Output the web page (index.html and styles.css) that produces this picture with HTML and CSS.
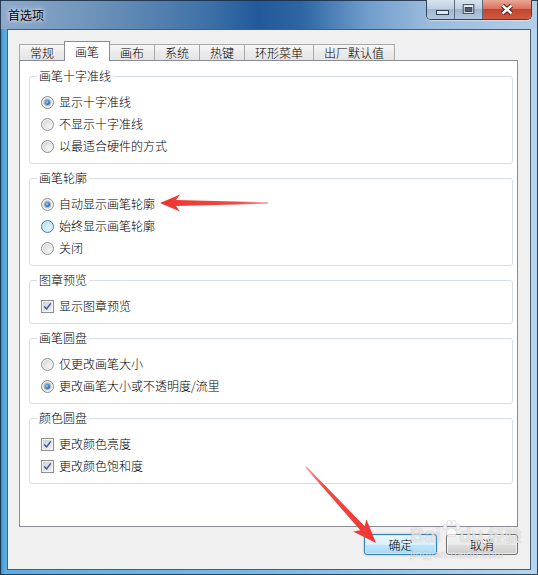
FILE: index.html
```html
<!DOCTYPE html>
<html lang="zh-CN">
<head>
    <meta charset="UTF-8">
    <title>首选项</title>
    <link rel="stylesheet" href="styles.css">
</head>
<body>
    <div class="window">
        <div class="titlebar">
            <span class="title">首选项</span>
            <div class="caption-buttons">
                <span class="cap-btn cap-min">
                    <svg viewBox="0 0 27 19" width="27" height="19">
                        <rect x="9.5" y="10.5" width="12" height="4" fill="#dfe7f0" stroke="#2f3d50"/>
                    </svg>
                </span>
                <span class="cap-btn cap-max">
                    <svg viewBox="0 0 28 19" width="28" height="19">
                        <rect x="8.5" y="4.5" width="11" height="9" fill="#f4f7fa" stroke="#2f3d50"/>
                        <rect x="10.5" y="7.5" width="7" height="4" fill="#4a5d74" stroke="#2f3d50"/>
                    </svg>
                </span>
                <span class="cap-btn cap-close">
                    <svg viewBox="0 0 48 19" width="48" height="19">
                        <path d="M19.5 5.5 L28.5 13.5 M28.5 5.5 L19.5 13.5" stroke="#4a1e16" stroke-width="4.4" fill="none"/>
                        <path d="M19.5 5.5 L28.5 13.5 M28.5 5.5 L19.5 13.5" stroke="#ffffff" stroke-width="2.4" fill="none"/>
                    </svg>
                </span>
            </div>
        </div>

        <div class="client">
            <div class="tabs">
                <span class="tab">常规</span>
                <span class="tab active">画笔</span>
                <span class="tab">画布</span>
                <span class="tab">系统</span>
                <span class="tab">热键</span>
                <span class="tab">环形菜单</span>
                <span class="tab">出厂默认值</span>
            </div>

            <div class="panel">
                <fieldset class="group">
                    <legend>画笔十字准线</legend>
                    <label class="option"><span class="radio checked"></span>显示十字准线</label>
                    <label class="option"><span class="radio"></span>不显示十字准线</label>
                    <label class="option"><span class="radio"></span>以最适合硬件的方式</label>
                </fieldset>

                <fieldset class="group">
                    <legend>画笔轮廓</legend>
                    <label class="option"><span class="radio checked"></span>自动显示画笔轮廓</label>
                    <label class="option"><span class="radio hot"></span>始终显示画笔轮廓</label>
                    <label class="option"><span class="radio"></span>关闭</label>
                </fieldset>

                <fieldset class="group">
                    <legend>图章预览</legend>
                    <label class="option">
                        <span class="check"><svg viewBox="0 0 9 9" width="9" height="9"><path d="M1.2 4.4 L3.6 6.9 L7.8 1.4" /></svg></span>显示图章预览
                    </label>
                </fieldset>

                <fieldset class="group">
                    <legend>画笔圆盘</legend>
                    <label class="option"><span class="radio"></span>仅更改画笔大小</label>
                    <label class="option"><span class="radio checked"></span>更改画笔大小或不透明度/流里</label>
                </fieldset>

                <fieldset class="group">
                    <legend>颜色圆盘</legend>
                    <label class="option">
                        <span class="check"><svg viewBox="0 0 9 9" width="9" height="9"><path d="M1.2 4.4 L3.6 6.9 L7.8 1.4" /></svg></span>更改颜色亮度
                    </label>
                    <label class="option">
                        <span class="check"><svg viewBox="0 0 9 9" width="9" height="9"><path d="M1.2 4.4 L3.6 6.9 L7.8 1.4" /></svg></span>更改颜色饱和度
                    </label>
                </fieldset>
            </div>

            <div class="buttons">
                <button class="btn btn-default">确定</button>
                <button class="btn">取消</button>
            </div>
        </div>

        <!-- annotation arrows drawn over the dialog -->
        <svg class="annotations" viewBox="0 0 538 575" width="538" height="575">
            <defs>
                <linearGradient id="fadeLeft" x1="160" y1="0" x2="270" y2="0" gradientUnits="userSpaceOnUse">
                    <stop offset="0" stop-color="#ee3530"/>
                    <stop offset="0.7" stop-color="#f04a44"/>
                    <stop offset="1" stop-color="#f7a7a3"/>
                </linearGradient>
                <linearGradient id="fadeDown" x1="376" y1="543" x2="306" y2="467" gradientUnits="userSpaceOnUse">
                    <stop offset="0" stop-color="#ee3530"/>
                    <stop offset="0.75" stop-color="#f04a44"/>
                    <stop offset="1" stop-color="#f6a09c"/>
                </linearGradient>
            </defs>
            <polygon fill="url(#fadeLeft)" points="160,203 180,194.5 176,200 268,202.3 268,203.7 176,206 180,211.5"/>
            <polygon fill="url(#fadeDown)" points="376,543 353.2,531.5 360.3,530.3 305.4,467.5 306.6,466.5 364.7,526.3 366.4,519.3"/>
        </svg>

        <div class="watermark">
            <div class="wm-logo">Bai<svg class="wm-paw" viewBox="0 0 20 18" width="20" height="18">
                <ellipse cx="4" cy="7" rx="2.2" ry="2.8"/>
                <ellipse cx="8" cy="3" rx="2.2" ry="2.8"/>
                <ellipse cx="13" cy="3" rx="2.2" ry="2.8"/>
                <ellipse cx="17" cy="7" rx="2.2" ry="2.8"/>
                <path d="M10.5 8 C7 8 5 12 5.5 14.5 C6 17 9 16 10.5 16 C12 16 15 17 15.5 14.5 C16 12 14 8 10.5 8 Z"/>
            </svg>du<span class="wm-cn">经验</span></div>
            <div class="wm-url">jingyan.baidu.com</div>
        </div>
    </div>
</body>
</html>
```

FILE: styles.css
```css
* {
    margin: 0;
    padding: 0;
    box-sizing: border-box;
}

body {
    width: 538px;
    height: 575px;
    overflow: hidden;
    font-family: "Noto Sans CJK SC", "Liberation Sans", sans-serif;
    font-size: 12px;
    font-weight: 300;
    color: #000;
    background: #fff;
}

/* Window frame */
.window {
    position: relative;
    width: 538px;
    height: 575px;
    display: flex;
    flex-direction: column;
    background: linear-gradient(90deg, #2b6ca6 0, #4b9fd7 2px, #5caee0 6px, #79bae5 50%, #b5d6f0 100%);
    box-shadow: inset 0 0 0 1px rgba(24, 44, 66, 0.85);
}

.titlebar {
    height: 29px;
    display: flex;
    align-items: flex-start;
    padding: 0 6px 0 8px;
    background: linear-gradient(90deg, #8daacb 0, #6d92b9 18%, #3f72a8 38%, #22599a 48%, #2d66a3 56%, #6f9ccb 68%, #9cbcdd 80%, #b3cee7 100%);
    box-shadow: inset 0 1px 0 rgba(24, 44, 66, 0.85), inset 1px 0 0 rgba(24, 44, 66, 0.85), inset -1px 0 0 rgba(24, 44, 66, 0.85);
}

.title {
    padding-top: 7px;
    line-height: 16px;
    font-size: 12px;
    font-weight: 400;
    color: #000;
    text-shadow: 0 0 6px rgba(255, 255, 255, 0.9), 0 0 3px rgba(255, 255, 255, 0.8);
}

/* Caption buttons */
.caption-buttons {
    margin-left: auto;
    display: flex;
    height: 20px;
    border: 1px solid #34435a;
    border-top: none;
    border-radius: 0 0 5px 5px;
    overflow: hidden;
    box-shadow: 0 1px 0 rgba(255, 255, 255, 0.45);
}

.cap-btn {
    display: flex;
    height: 19px;
}

.cap-min,
.cap-max {
    background: linear-gradient(#d8e3ef 0, #bfcfe1 45%, #a2b7cf 50%, #b3c8de 100%);
    border-right: 1px solid #5b6b80;
}

.cap-min {
    width: 28px;
}

.cap-max {
    width: 28px;
}

.cap-close {
    width: 48px;
    background: linear-gradient(#eaa895 0, #d9735e 45%, #c4442c 50%, #cf5a40 100%);
}

/* Client area */
.client {
    flex: 1;
    margin: 0 7px 5px;
    display: flex;
    flex-direction: column;
    padding: 11px 12px 14px 11px;
    background: #f0f0f0;
    border: 1px solid #4f5b69;
}

.tabs {
    display: flex;
    align-items: flex-end;
}

.tab {
    height: 16px;
    padding: 0 10px;
    margin-right: -1px;
    line-height: 15px;
    border: 1px solid #a7a9ad;
    border-bottom: none;
    background: linear-gradient(#f7f7f7, #ebebeb 50%, #e4e4e4);
    white-space: nowrap;
}

.tab.active {
    position: relative;
    z-index: 1;
    height: 20px;
    margin-bottom: -1px;
    padding-top: 2px;
    background: #fff;
    border-color: #898c95;
}

.panel {
    flex: 1;
    display: flex;
    flex-direction: column;
    gap: 7px;
    padding: 8px 4px 0 9px;
    background: #fff;
    border: 1px solid #898c95;
}

/* Group boxes */
.group {
    min-width: 0;
    padding: 8px 0 6px 11px;
    border: 1px solid #d5dfe5;
    border-radius: 3px;
}

.group legend {
    margin-left: -4px;
    padding: 0 2px;
    line-height: 14px;
}

.option {
    display: flex;
    align-items: center;
    gap: 5px;
    height: 22px;
    line-height: 14px;
}

/* Radio buttons */
.radio {
    position: relative;
    flex: none;
    width: 13px;
    height: 13px;
    border-radius: 50%;
    border: 1px solid #8e8f8f;
    background: radial-gradient(circle at 65% 65%, #f6f6f6 0, #e2e2e2 45%, #c9c9c9 100%);
    box-shadow: inset 0 0 0 1px #f4f4f4;
}

.radio.checked::after {
    content: "";
    position: absolute;
    left: 3px;
    top: 3px;
    width: 5px;
    height: 5px;
    border-radius: 50%;
    background: radial-gradient(circle at 40% 40%, #b6e2fb 0, #3a8bcf 40%, #0f3f78 100%);
    box-shadow: 0 0 0 1px rgba(40, 80, 120, 0.35);
}

.radio.hot {
    border-color: #3c7fb1;
    background: radial-gradient(circle at 60% 60%, #eaf7fd 0, #bfe4f9 55%, #8ecdf1 100%);
    box-shadow: inset 0 0 0 1px #def1fb;
}

/* Check boxes */
.check {
    flex: none;
    display: flex;
    align-items: center;
    justify-content: center;
    width: 13px;
    height: 13px;
    border: 1px solid #8e8f8f;
    background: linear-gradient(135deg, #c9cdd3, #f4f4f4);
    box-shadow: inset 0 0 0 1px #f4f4f4;
}

.check path {
    fill: none;
    stroke: #3f5595;
    stroke-width: 1.5;
}

/* Dialog buttons */
.buttons {
    display: flex;
    justify-content: flex-end;
    gap: 9px;
    margin-top: 7px;
}

.btn {
    width: 72px;
    height: 21px;
    font: inherit;
    font-size: 12px;
    line-height: 14px;
    color: #000;
    border: 1px solid #707070;
    border-radius: 3px;
    background: linear-gradient(#f2f2f2 0, #ebebeb 50%, #dddddd 50%, #cfcfcf 100%);
    box-shadow: inset 0 0 0 1px rgba(255, 255, 255, 0.7);
}

.btn-default {
    width: 73px;
    border-color: #3c7fb1;
    background: linear-gradient(#eaf6fd 0, #d9f0fc 50%, #bee6fd 50%, #a7d9f5 100%);
    box-shadow: inset 0 0 0 1px #c4ebfc, 0 0 2px #6bb5e6;
}

/* Overlays: annotation arrows and watermark */
.annotations {
    position: absolute;
    left: 0;
    top: 0;
    pointer-events: none;
}

.watermark {
    position: absolute;
    left: 410px;
    top: 520px;
    color: rgba(255, 255, 255, 0.7);
    text-shadow: 0 0 1px rgba(0, 0, 0, 0.3);
    pointer-events: none;
}

.wm-logo {
    display: flex;
    align-items: flex-end;
    font-family: "Liberation Sans", sans-serif;
    font-size: 20px;
    font-weight: bold;
    line-height: 26px;
}

.wm-paw {
    margin: 0 -2px 10px 0;
    fill: rgba(255, 255, 255, 0.7);
    stroke: rgba(0, 0, 0, 0.2);
    stroke-width: 0.6;
}

.wm-cn {
    margin-left: 4px;
    font-family: "Noto Sans CJK SC", sans-serif;
    font-size: 17px;
}

.wm-url {
    font-family: "Liberation Sans", sans-serif;
    font-size: 11px;
    line-height: 13px;
    letter-spacing: 0.3px;
}
```
